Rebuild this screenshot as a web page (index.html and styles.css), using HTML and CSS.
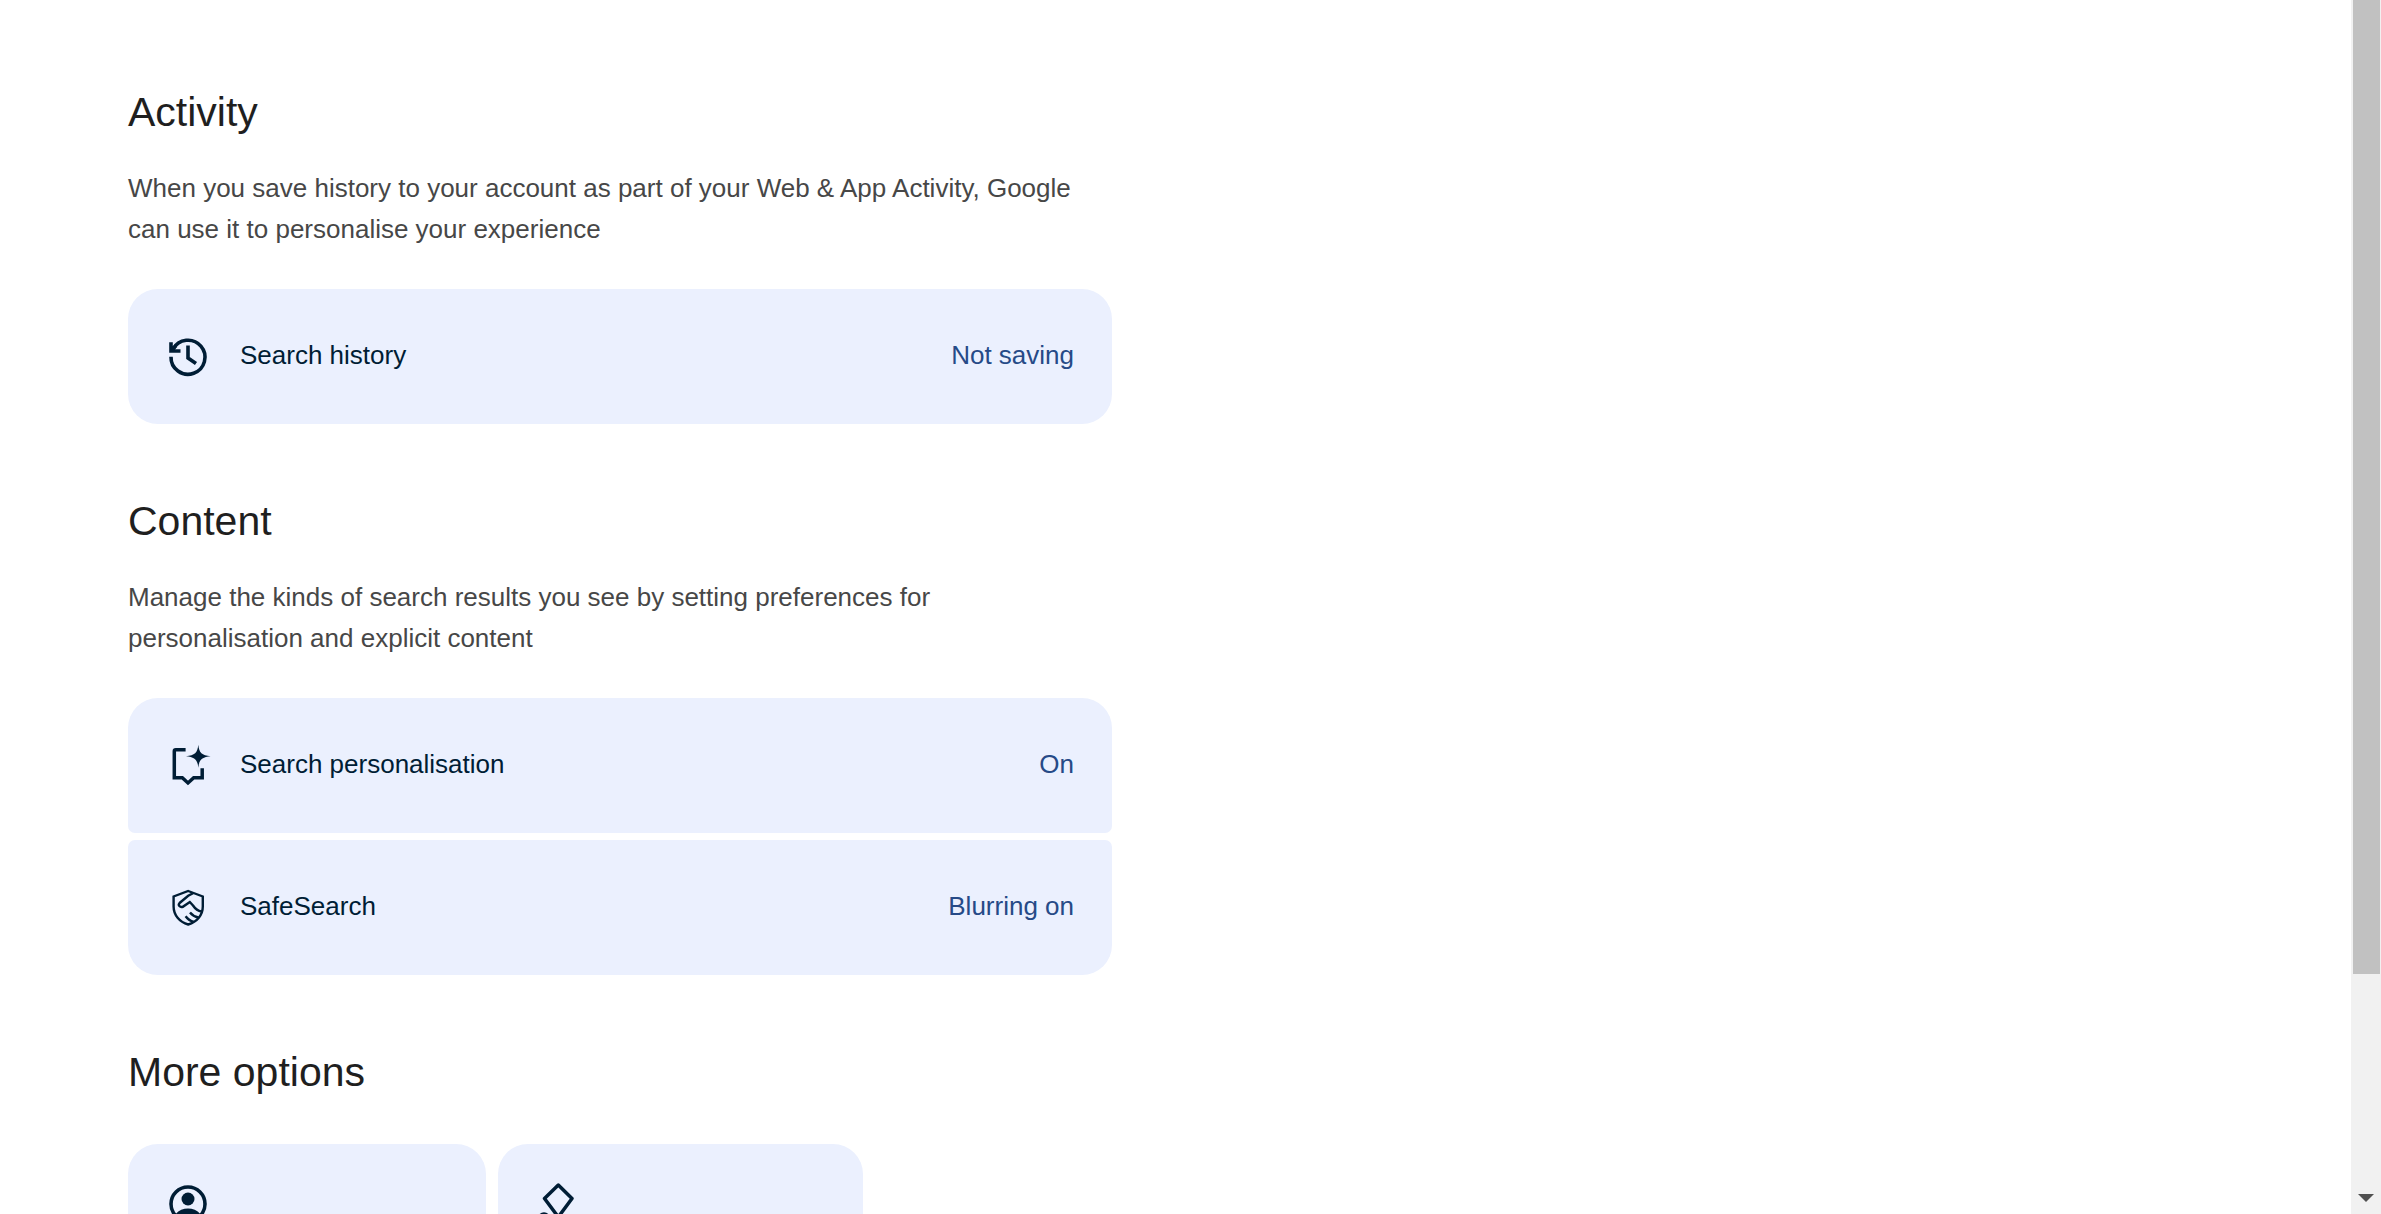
FILE: index.html
```html
<!DOCTYPE html>
<html lang="en-GB">
<head>
  <meta charset="UTF-8" />
  <title>Search settings</title>
  <link rel="stylesheet" href="styles.css">
</head>
<body>

  <main class="content">
    <section>
      <h2>Activity</h2>
      <p>When you save history to your account as part of your Web &amp; App Activity, Google can use it to personalise your experience</p>
      <div class="list">
        <a class="row" href="#history">
          <svg class="icon" viewBox="0 0 40 40" stroke-width="3.6">
            <path d="M3 19.7A17 17 0 1 0 5 12.2" />
            <path d="M3 5.2V14H12.5M3.5 13.5L8 8.5" />
            <path d="M20 8.5V21L28 26.5" />
          </svg>
          <span class="label">Search history</span>
          <span class="value">Not saving</span>
        </a>
      </div>
    </section>

    <section>
      <h2>Content</h2>
      <p>Manage the kinds of search results you see by setting preferences for personalisation and explicit content</p>
      <div class="list">
        <a class="row" href="#personalisation">
          <svg class="icon" viewBox="0 0 40 40" stroke-width="3.5">
            <path d="M17.6 3.8H7.8Q6.3 3.8 6.3 5.3V31.8H14.3L20 37L25.7 31.8H34.2V22.2" />
            <path class="fill" d="M30.3 -1.3C31.1 6.7 33.8 9.4 42.6 10.2C33.8 11 31.1 13.7 30.3 21.7C29.5 13.7 26.8 11 18 10.2C26.8 9.4 29.5 6.7 30.3 -1.3Z" />
          </svg>
          <span class="label">Search personalisation</span>
          <span class="value">On</span>
        </a>
        <a class="row" href="#safesearch">
          <svg class="icon" viewBox="0 0 40 40" stroke-width="2.4">
            <path d="M20.2 3L34.8 8.5V18.5C34.8 27 29 34 20.2 36.5C11.4 34 5.6 27 5.6 18.5V8.5Z" />
            <path d="M25 5.2L20.2 7.8L11.6 15C9.6 17 12 19.8 14.8 18.8L21.8 14L25 17.5C27 20.5 30 23 33.5 23.5" />
            <path d="M22 24.5C24 27 27 28.8 30.5 29.5" />
            <path d="M17.6 28.2C19.6 31 22.5 33 26 33.8" />
          </svg>
          <span class="label">SafeSearch</span>
          <span class="value">Blurring on</span>
        </a>
      </div>
    </section>

    <section class="more">
      <h2>More options</h2>
      <div class="tiles">
        <a class="tile" href="#account" aria-label="Account">
          <svg class="icon" viewBox="0 0 40 40" stroke-width="3.6">
            <circle cx="20" cy="20" r="17" />
            <circle class="fill" cx="20" cy="15" r="6.5" />
            <path class="fill" d="M7 31C10 26.5 15 24.5 20 24.5S30 26.5 33 31C26 38.5 14 38.5 7 31Z" />
          </svg>
        </a>
        <a class="tile" href="#other" aria-label="Other settings">
          <svg class="icon" viewBox="0 0 40 40" stroke-width="3.5" stroke-linejoin="round">
            <path d="M20.3 1L34 14.5L20.3 33L6.5 14.5Z" />
            <circle cx="6" cy="34.5" r="4.5" />
          </svg>
        </a>
      </div>
    </section>
  </main>

  <div class="scrollbar" aria-hidden="true">
    <div class="thumb"></div>
    <svg class="arrow" viewBox="0 0 16 8"><path d="M0 0H16L8 8Z" /></svg>
  </div>

</body>
</html>
```
FILE: styles.css
```css
* {
  box-sizing: border-box;
}
body {
  margin: 0;
  height: 100vh;
  display: flex;
  overflow: hidden;
  background: #fff;
  font-family: "Liberation Sans", Arial, sans-serif;
  font-size: 26px;
  color: #001d35;
}
.content {
  flex: 1;
  padding: 86px 128px 0;
  overflow: hidden;
}
section {
  max-width: 984px;
  margin-bottom: 71px;
}
h2 {
  margin: 0 0 30px;
  font-size: 41px;
  font-weight: 400;
  line-height: 52px;
  color: #1f1f1f;
}
p {
  margin: 0 0 39px;
  padding-right: 16px;
  line-height: 41px;
  color: #474747;
}
a {
  color: inherit;
  text-decoration: none;
}

/* setting rows */
.list {
  display: flex;
  flex-direction: column;
  gap: 7px;
}
.row {
  display: flex;
  align-items: center;
  gap: 32px;
  height: 135px;
  padding: 0 38px 0 40px;
  border-radius: 7px;
  background: #ebf0fe;
}
.row:first-child {
  border-top-left-radius: 30px;
  border-top-right-radius: 30px;
}
.row:last-child {
  border-bottom-left-radius: 30px;
  border-bottom-right-radius: 30px;
}
.label,
.value {
  padding-bottom: 2px;
}
.label {
  flex: 1;
}
.value {
  color: #264a87;
}

.icon {
  flex: none;
  width: 40px;
  height: 40px;
  overflow: visible;
  fill: none;
  stroke: #001d35;
}
.icon .fill {
  fill: #001d35;
  stroke: none;
}

/* more options */
.more h2 {
  margin-bottom: 46px;
}
.tiles {
  display: grid;
  grid-template-columns: 358px 365px;
  gap: 12px;
}
.tile {
  min-height: 200px;
  padding: 40px;
  border-radius: 30px;
  background: #ebf0fe;
}

/* scrollbar */
.scrollbar {
  display: flex;
  flex-direction: column;
  justify-content: space-between;
  align-items: center;
  width: 30px;
  padding-bottom: 12px;
  background: #f1f1f1;
}
.thumb {
  width: 27px;
  height: 81%;
  background: #c1c1c1;
}
.arrow {
  width: 16px;
  height: 8px;
  fill: #505050;
}
```
